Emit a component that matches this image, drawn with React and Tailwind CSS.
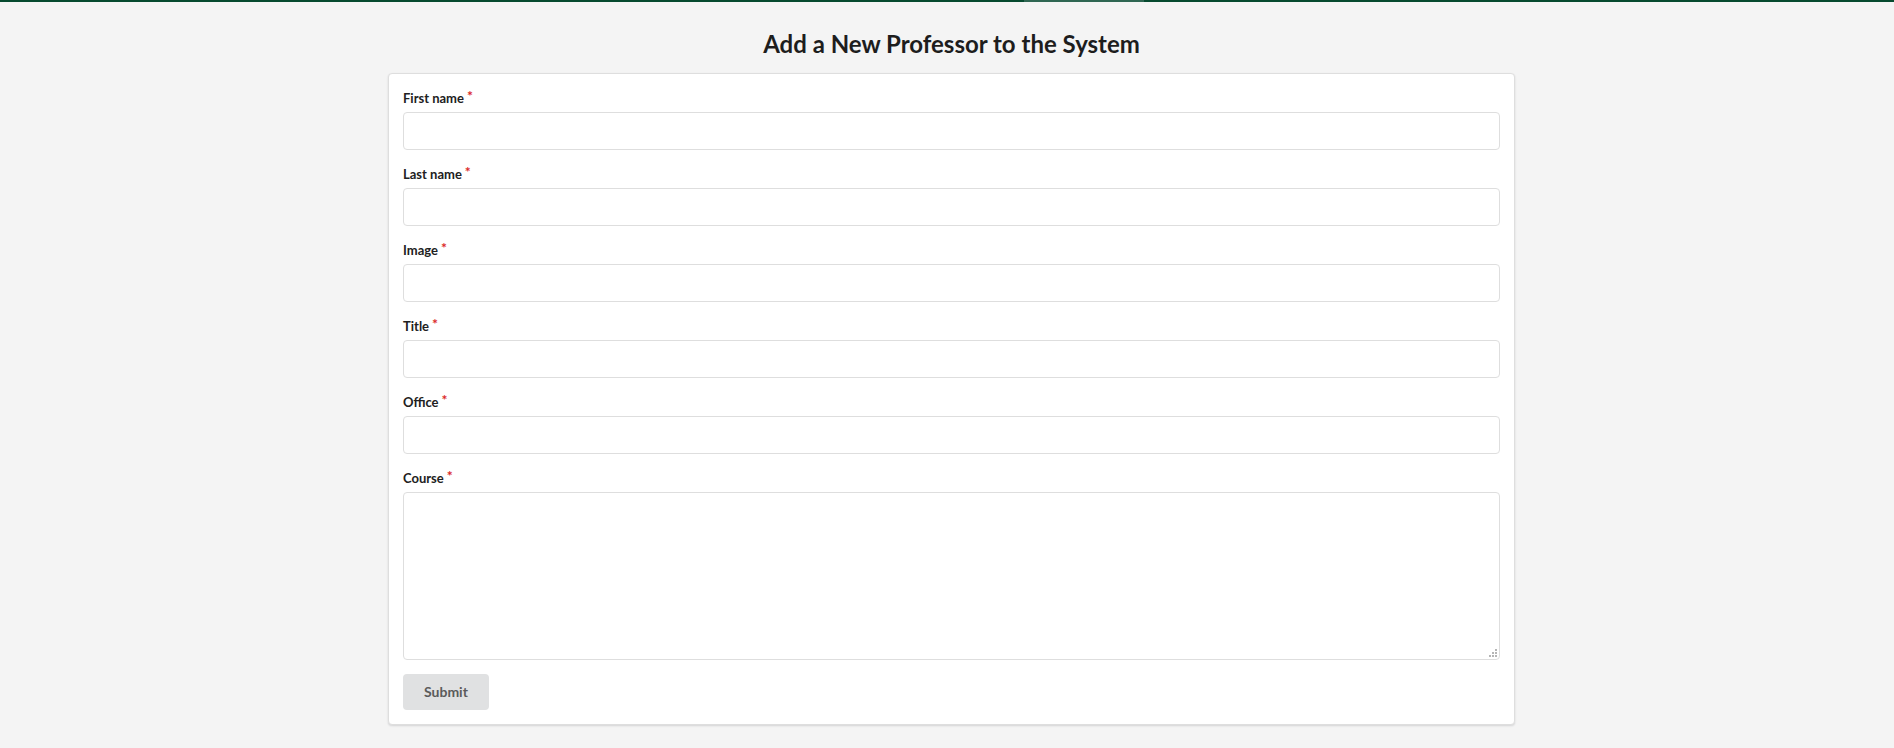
import React from 'react';

const fields = [
  { name: 'firstName', label: 'First name' },
  { name: 'lastName', label: 'Last name' },
  { name: 'image', label: 'Image' },
  { name: 'title', label: 'Title' },
  { name: 'office', label: 'Office' },
];

// Label with the little red "required" star
const FieldLabel = ({ children }) => (
  <label className="block mb-1 text-[13px] leading-[20px] font-bold text-[#212121]">
    {children}
    <span className="ml-[3px] text-[14px] text-[#db2828] relative -top-[2px]">*</span>
  </label>
);

// dotted resize grip drawn in the textarea corner
const Grip = () => (
  <svg
    width="8"
    height="8"
    viewBox="0 0 8 8"
    className="absolute right-[3px] bottom-[3px] pointer-events-none"
    fill="#b5b5b5"
  >
    <rect x="6" y="0" width="2" height="2" />
    <rect x="3" y="3" width="2" height="2" />
    <rect x="6" y="3" width="2" height="2" />
    <rect x="0" y="6" width="2" height="2" />
    <rect x="3" y="6" width="2" height="2" />
    <rect x="6" y="6" width="2" height="2" />
  </svg>
);

const AddProfessor = () => {
  return (
    <div
      className="min-h-screen bg-[#f4f4f4] text-[14px] text-[#212121]"
      style={{ fontFamily: 'Lato, "Liberation Sans", sans-serif' }}
    >
      {/* Top loading bar */}
      <div className="flex h-[2px] bg-[#064a2f]">
        <div className="w-[1024px]" />
        <div className="w-[120px] bg-[#2f6652]" />
      </div>

      <div className="flex flex-col items-center pl-[9px]">
        <h2 className="mt-[27px] mb-[13px] text-[24px] leading-[30.86px] font-bold text-[#1d1d1d]">
          Add a New Professor to the System
        </h2>

        <form
          className="w-[1127px] bg-white border border-[#dedede] rounded-[4px] shadow-[0_1px_2px_0_rgba(34,36,38,0.15)] p-[14px]"
          onSubmit={(e) => e.preventDefault()}
        >
          {fields.map((f) => (
            <div key={f.name} className="mb-[14px]">
              <FieldLabel>{f.label}</FieldLabel>
              <input
                name={f.name}
                type="text"
                className="block w-full h-[38px] px-[14px] bg-white border border-[#dedede] rounded-[4px] outline-none"
              />
            </div>
          ))}

          <div className="mb-[14px]">
            <FieldLabel>Course</FieldLabel>
            <div className="relative">
              <textarea
                name="course"
                className="block w-full h-[168px] px-[14px] py-[10px] bg-white border border-[#dedede] rounded-[4px] outline-none resize-none"
              />
              <Grip />
            </div>
          </div>

          <button
            type="submit"
            className="h-[36px] px-[21px] bg-[#e0e1e2] rounded-[4px] text-[14px] font-bold text-[#5b5b5b]"
          >
            Submit
          </button>
        </form>
      </div>
    </div>
  );
};

export default AddProfessor;
